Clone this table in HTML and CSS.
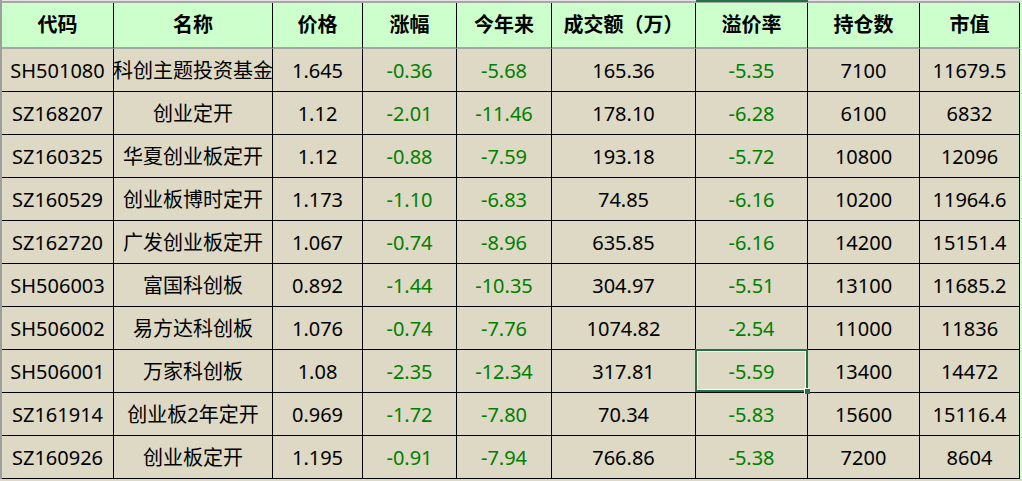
FILE: index.html
```html
<!DOCTYPE html>
<html lang="zh-CN">
<head>
<meta charset="utf-8">
<title>基金</title>
<link rel="stylesheet" href="styles.css">
</head>
<body>
<div class="sheet">
  <div class="strip"></div><div class="strip"></div><div class="strip"></div><div class="strip"></div><div class="strip"></div><div class="strip"></div><div class="strip strip-sel"></div><div class="strip"></div><div class="strip"></div>

  <div class="hd">代码</div><div class="hd">名称</div><div class="hd">价格</div><div class="hd">涨幅</div><div class="hd">今年来</div><div class="hd">成交额（万）</div><div class="hd">溢价率</div><div class="hd">持仓数</div><div class="hd">市值</div>

  <div class="c">SH501080</div><div class="c">科创主题投资基金</div><div class="c">1.645</div><div class="c g">-0.36</div><div class="c g">-5.68</div><div class="c">165.36</div><div class="c g">-5.35</div><div class="c">7100</div><div class="c">11679.5</div>
  <div class="c">SZ168207</div><div class="c">创业定开</div><div class="c">1.12</div><div class="c g">-2.01</div><div class="c g">-11.46</div><div class="c">178.10</div><div class="c g">-6.28</div><div class="c">6100</div><div class="c">6832</div>
  <div class="c">SZ160325</div><div class="c">华夏创业板定开</div><div class="c">1.12</div><div class="c g">-0.88</div><div class="c g">-7.59</div><div class="c">193.18</div><div class="c g">-5.72</div><div class="c">10800</div><div class="c">12096</div>
  <div class="c">SZ160529</div><div class="c">创业板博时定开</div><div class="c">1.173</div><div class="c g">-1.10</div><div class="c g">-6.83</div><div class="c">74.85</div><div class="c g">-6.16</div><div class="c">10200</div><div class="c">11964.6</div>
  <div class="c">SZ162720</div><div class="c">广发创业板定开</div><div class="c">1.067</div><div class="c g">-0.74</div><div class="c g">-8.96</div><div class="c">635.85</div><div class="c g">-6.16</div><div class="c">14200</div><div class="c">15151.4</div>
  <div class="c">SH506003</div><div class="c">富国科创板</div><div class="c">0.892</div><div class="c g">-1.44</div><div class="c g">-10.35</div><div class="c">304.97</div><div class="c g">-5.51</div><div class="c">13100</div><div class="c">11685.2</div>
  <div class="c">SH506002</div><div class="c">易方达科创板</div><div class="c">1.076</div><div class="c g">-0.74</div><div class="c g">-7.76</div><div class="c">1074.82</div><div class="c g">-2.54</div><div class="c">11000</div><div class="c">11836</div>
  <div class="c">SH506001</div><div class="c">万家科创板</div><div class="c">1.08</div><div class="c g">-2.35</div><div class="c g">-12.34</div><div class="c">317.81</div><div class="c g sel">-5.59</div><div class="c">13400</div><div class="c">14472</div>
  <div class="c">SZ161914</div><div class="c">创业板2年定开</div><div class="c">0.969</div><div class="c g">-1.72</div><div class="c g">-7.80</div><div class="c">70.34</div><div class="c g">-5.83</div><div class="c">15600</div><div class="c">15116.4</div>
  <div class="c">SZ160926</div><div class="c">创业板定开</div><div class="c">1.195</div><div class="c g">-0.91</div><div class="c g">-7.94</div><div class="c">766.86</div><div class="c g">-5.38</div><div class="c">7200</div><div class="c">8604</div>
</div>
</body>
</html>
```

FILE: styles.css
```css
html, body {
  margin: 0;
  padding: 0;
  background: #ddd9c4;
}

body {
  font-family: "Noto Sans", "Noto Sans CJK SC", sans-serif;
  font-size: 20px;
  color: #000;
  overflow: hidden;
}

.sheet {
  display: grid;
  grid-template-columns: 112px 159px 90px 94px 95px 144px 112px 112px 100px;
  grid-template-rows: 3px 46px repeat(10, 43px);
  width: max-content;
  border-left: 2px solid #9e9e9e;
  border-right: 2px solid #ccffcc;
}

.strip {
  background: linear-gradient(#e3e3e3 0 1px, #a6a6a6 1px);
}

.strip-sel {
  background: linear-gradient(#217346 0 2px, #a6a6a6 2px);
}

.hd,
.c {
  box-sizing: border-box;
  display: flex;
  align-items: center;
  justify-content: center;
  white-space: nowrap;
  border-right: 1px solid #000;
  line-height: 1;
}

.hd {
  background: #ccffcc;
  border-bottom: 2px solid #a6a6a6;
  font-weight: bold;
}

.c {
  background: #ddd9c4;
  border-bottom: 1px solid #000;
  padding-top: 1px;
}

.g {
  color: #008000;
}

.sel {
  position: relative;
}

.sel::after {
  content: "";
  position: absolute;
  left: -1px;
  top: -1px;
  right: -1px;
  bottom: 0;
  border: 2px solid #217346;
  box-shadow: inset 0 0 0 1px #ffffff;
}

.sel::before {
  content: "";
  position: absolute;
  right: -3px;
  bottom: -2px;
  width: 5px;
  height: 5px;
  background: #217346;
  border-left: 1px solid #fff;
  border-top: 1px solid #fff;
  z-index: 2;
}
```
